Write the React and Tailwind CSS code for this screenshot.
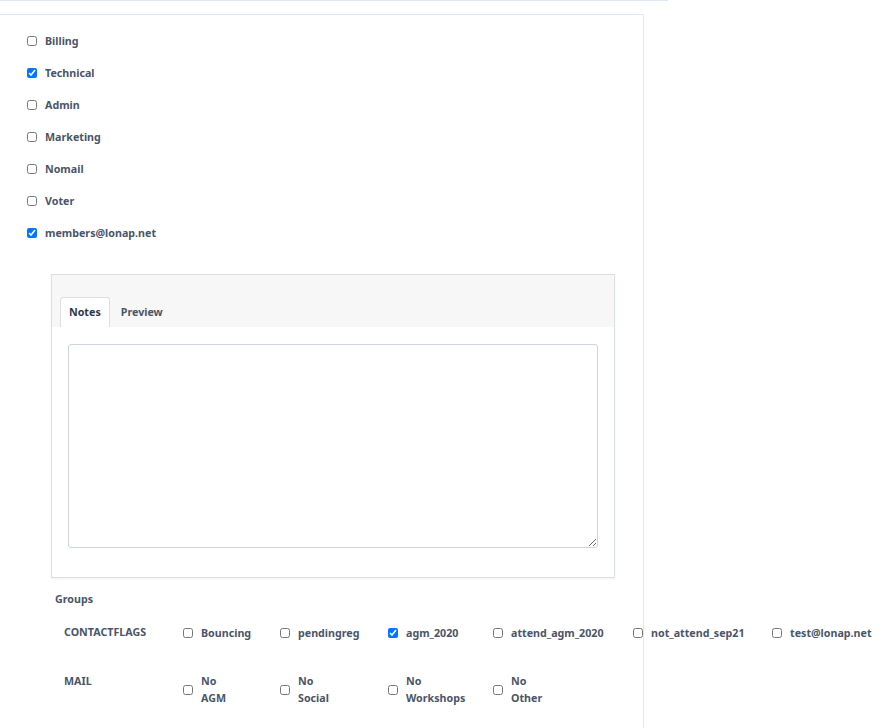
const roles = [
  { label: "Billing", checked: false },
  { label: "Technical", checked: true },
  { label: "Admin", checked: false },
  { label: "Marketing", checked: false },
  { label: "Nomail", checked: false },
  { label: "Voter", checked: false },
  { label: "members@lonap.net", checked: true },
];

const groups = [
  {
    name: "CONTACTFLAGS",
    items: [
      { label: "Bouncing", checked: false },
      { label: "pendingreg", checked: false },
      { label: "agm_2020", checked: true },
      { label: "attend_agm_2020", checked: false },
      { label: "not_attend_sep21", checked: false },
      { label: "test@lonap.net", checked: false },
    ],
  },
  {
    name: "MAIL",
    wrap: true,
    items: [
      { label: "No AGM", checked: false },
      { label: "No Social", checked: false },
      { label: "No Workshops", checked: false },
      { label: "No Other", checked: false },
    ],
  },
];

const Box = ({ checked }) => (
  <input
    type="checkbox"
    defaultChecked={checked}
    className="m-0 h-[10px] w-[10px] shrink-0 accent-[#0075ff]"
  />
);

export default function App() {
  return (
    <div
      className="min-h-screen w-[883px] bg-white text-[10.7px] font-bold text-[#4a5568]"
      style={{ fontFamily: '"Noto Sans", "Open Sans", sans-serif' }}
    >
      <div className="h-px w-[668px] bg-[#e2e8f0]" />
      <div className="mt-[13px] min-h-[714px] w-[644px] border-t border-r border-[#e2e8f0] pt-[10px]">
        <div className="flex flex-col pl-[27px]">
          {roles.map((r) => (
            <label key={r.label} className="flex h-[32px] items-center gap-[8px]">
              <Box checked={r.checked} />
              <span>{r.label}</span>
            </label>
          ))}
        </div>

        <div className="ml-[51px] mt-[25px] w-[564px] border border-[#dcdfe3] shadow-[0_1px_2px_rgba(0,0,0,0.06)]">
          <div className="flex h-[52px] items-end bg-[#f7f7f7] px-[8px]">
            <div className="flex h-[30px] items-center rounded-t-[3px] border border-b-0 border-[#dcdfe3] bg-white px-[8px] text-[#2d3748]">
              Notes
            </div>
            <div className="flex h-[30px] items-center px-[11px]">Preview</div>
          </div>
          <div className="px-[16px] pt-[17px] pb-[29px]">
            <textarea className="block h-[204px] w-full resize-y rounded-[3px] border border-[#cfd4da] bg-white" />
          </div>
        </div>

        <div className="ml-[55px] mt-[13px]">Groups</div>

        <div className="ml-[64px] mt-[17px] flex flex-col gap-[31px]">
          {groups.map((g) => (
            <div
              key={g.name}
              className="grid grid-cols-[119px_97px_108px_105px_140px_139px_120px] items-start"
            >
              <div className="leading-[17px]">{g.name}</div>
              {g.items.map((it) => (
                <label key={it.label} className="flex items-center gap-[8px] whitespace-nowrap">
                  <Box checked={it.checked} />
                  <span className={g.wrap ? "w-min whitespace-normal leading-[17px]" : "leading-[17px] mt-[1px]"}>
                    {it.label}
                  </span>
                </label>
              ))}
            </div>
          ))}
        </div>
      </div>
    </div>
  );
}
